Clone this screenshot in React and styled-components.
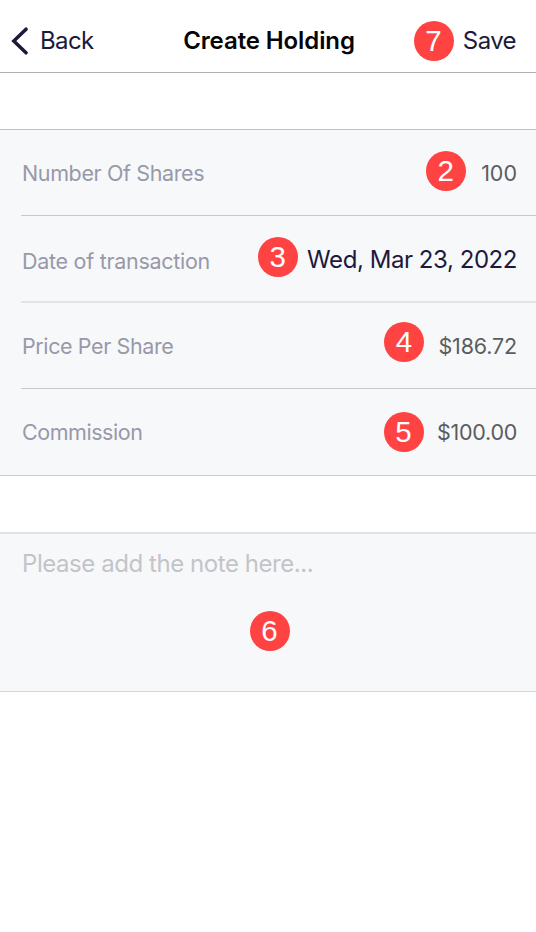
import React from "react";
import styled, { createGlobalStyle } from "styled-components";

const GlobalStyle = createGlobalStyle`
  body { margin: 0; background: #fff; font-family: Inter, sans-serif; }
  * { box-sizing: border-box; }
`;
const Screen = styled.main`
  height: 932px;
  background: #fff;
  overflow: hidden;
`;
const Header = styled.header`
  display: grid;
  grid-template-columns: 1fr auto 1fr;
  align-items: center;
  height: 73px;
  padding: 10px 0 0 2px;
  border-bottom: 1px solid #b0b0b3;
`;
const NavButton = styled.button`
  display: flex;
  align-items: center;
  gap: 11px;
  padding: 0;
  border: 0;
  background: none;
  color: #1c1a3a;
  font: 400 24px/30px Inter, sans-serif;
  letter-spacing: -0.6px;
`;
const BackButton = styled(NavButton)`
  margin-left: 9px;
`;
const SaveButton = styled(NavButton)`
  margin-right: 20px;
`;
const Title = styled.h1`
  margin: 0;
  color: #050507;
  font-size: 24px;
  line-height: 30px;
  font-weight: 600;
  letter-spacing: -0.1px;
`;
const Actions = styled.div`
  display: flex;
  align-items: center;
  justify-content: flex-end;
  gap: 9px;
`;
const Marker = styled.span`
  display: flex;
  align-items: center;
  justify-content: center;
  flex: none;
  width: 40px;
  height: 40px;
  margin-bottom: ${(p) => p.$lift || 0}px;
  padding-right: 1px;
  border-radius: 50%;
  background: #ff4242;
  color: #fff;
  font: 400 29.5px/40px "Liberation Sans", sans-serif;
  letter-spacing: 0;
`;
const Form = styled.section`
  margin-top: 56px;
  padding-left: 21px;
  background: #f7f8fa;
  border-top: 1px solid #c2c3c7;
  border-bottom: 1px solid #cbccd0;
`;
const Row = styled.div`
  display: flex;
  align-items: center;
  justify-content: space-between;
  height: ${(p) => p.$height}px;
  padding: ${(p) => p.$top || 0}px 19px 0 1px;
  border-top: ${(p) => p.$divider || "0"};
`;
const Label = styled.span`
  padding-top: ${(p) => p.$drop || 0}px;
  color: #9799a9;
  font-size: 21.5px;
  letter-spacing: ${(p) => p.$spacing}px;
`;
const Field = styled.div`
  display: flex;
  align-items: center;
  gap: ${(p) => p.$gap}px;
`;
const Value = styled.span`
  color: ${(p) => (p.$strong ? "#1c1a3a" : "#5c5c60")};
  font-size: ${(p) => (p.$strong ? 24 : 21.5)}px;
  letter-spacing: ${(p) => p.$spacing}px;
`;
const Note = styled.section`
  height: 160px;
  margin-top: 56px;
  padding: 15px 22px;
  background: #f7f8fa;
  border-top: 2px solid #e1e2e4;
  border-bottom: 1px solid #d5d6d9;
  color: #c3c4c8;
  font-size: 24px;
  line-height: 30px;
  letter-spacing: -0.44px;
`;
const NoteMarker = styled.div`
  display: flex;
  justify-content: center;
  padding: 32px 0 0 4px;
`;

const hairline = "1px solid #c8c9cd";
const softLine = "2px solid #e3e4e7";

const rows = [
  { label: "Number Of Shares", value: "100", marker: 2, height: 85, gap: 15, lift: 4, labelSpacing: -0.38, valueSpacing: 0 },
  { label: "Date of transaction", value: "Wed, Mar 23, 2022", marker: 3, height: 86, gap: 9, top: 1, lift: 4, drop: 3, labelSpacing: -0.28, valueSpacing: -0.44, strong: true, divider: hairline },
  { label: "Price Per Share", value: "$186.72", marker: 4, height: 87, gap: 14, lift: 8, labelSpacing: -0.4, valueSpacing: -0.15, divider: softLine },
  { label: "Commission", value: "$100.00", marker: 5, height: 87, gap: 13, labelSpacing: -0.45, valueSpacing: -0.28, divider: hairline },
];

export default function App() {
  return (
    <Screen>
      <GlobalStyle />
      <Header>
        <BackButton>
          <svg width="18" height="28" viewBox="0 0 18 28" fill="none">
            <path d="M15 2.2L2.8 14L15 25.8" stroke="#1c1a3a" strokeWidth="3.5" strokeLinecap="round" />
          </svg>
          <span>Back</span>
        </BackButton>
        <Title>Create Holding</Title>
        <Actions>
          <Marker>7</Marker>
          <SaveButton>Save</SaveButton>
        </Actions>
      </Header>
      <Form>
        {rows.map((r) => (
          <Row key={r.label} $height={r.height} $top={r.top} $divider={r.divider}>
            <Label $drop={r.drop} $spacing={r.labelSpacing}>{r.label}</Label>
            <Field $gap={r.gap}>
              <Marker $lift={r.lift}>{r.marker}</Marker>
              <Value $strong={r.strong} $spacing={r.valueSpacing}>{r.value}</Value>
            </Field>
          </Row>
        ))}
      </Form>
      <Note>
        Please add the note here...
        <NoteMarker><Marker>6</Marker></NoteMarker>
      </Note>
    </Screen>
  );
}
